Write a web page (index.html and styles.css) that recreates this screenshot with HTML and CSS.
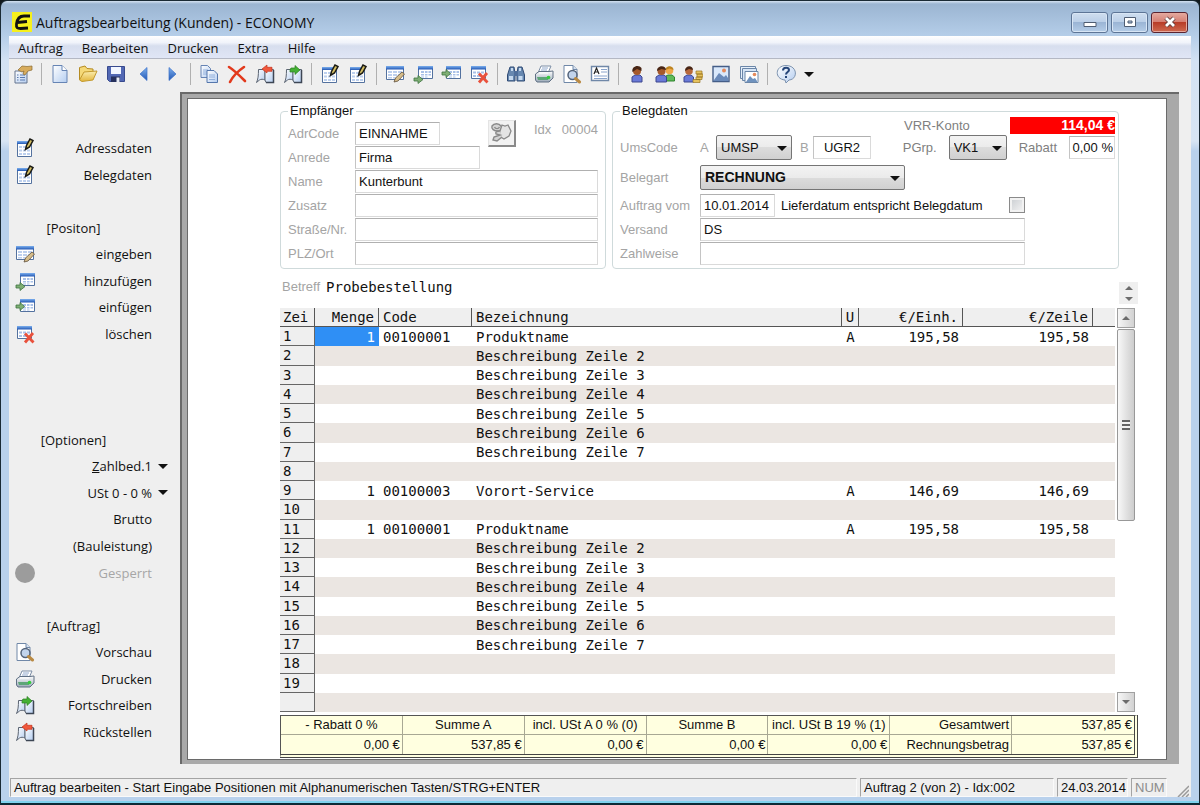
FILE: index.html
```html
<!DOCTYPE html>
<html lang="de">
<head>
  <meta charset="UTF-8" />
  <meta name="viewport" content="width=device-width, initial-scale=1.0"/>
  <title>Auftragsbearbeitung (Kunden) - ECONOMY</title>
  <link rel="stylesheet" href="styles.css">
</head>
<body>
  <!-- icon set -->
  <svg class="sprite" aria-hidden="true">
    <defs>
      <linearGradient id="g-page" x1="0" y1="0" x2="1" y2="1">
        <stop offset="0" stop-color="#fff"/><stop offset="1" stop-color="#b4cdf0"/>
      </linearGradient>
      <linearGradient id="g-blue" x1="0" y1="0" x2="0" y2="1">
        <stop offset="0" stop-color="#7db0ee"/><stop offset="1" stop-color="#2257b4"/>
      </linearGradient>
      <linearGradient id="g-gold" x1="0" y1="0" x2="0" y2="1">
        <stop offset="0" stop-color="#fbeeb0"/><stop offset="1" stop-color="#e3b53c"/>
      </linearGradient>
      <linearGradient id="g-grey" x1="0" y1="0" x2="0" y2="1">
        <stop offset="0" stop-color="#fff"/><stop offset="1" stop-color="#9ba9b8"/>
      </linearGradient>
    </defs>
    <symbol id="i-props" viewBox="0 0 20 20">
      <path d="M2 7h12v12H2z" fill="url(#g-page)" stroke="#64748f"/>
      <path d="M4 11h1.500M7 11h5M4 13.500h1.500M7 13.500h5M4 16h1.500M7 16h5" stroke="#5878ae"/>
      <path d="M5 6l4-4 5 .5 5-.5v4l-4 1-3 4-2-1 1-3-2 1z" fill="#d8ac5c" stroke="#8a6a30" stroke-width=".7"/>
    </symbol>
    <symbol id="i-new" viewBox="0 0 20 20">
      <path d="M3 1.500h9l5 5v12H3z" fill="url(#g-page)" stroke="#6684b4"/>
      <path d="M12 1.500v5h5" fill="#fff" stroke="#6684b4"/>
    </symbol>
    <symbol id="i-open" viewBox="0 0 20 20">
      <path d="M1.500 16V3.500L7 2l2 2.500 6 .5v3" fill="#f5d978" stroke="#b58b22"/>
      <path d="M1.500 16L6 8l13-1-4 9-11 1.500z" fill="url(#g-gold)" stroke="#c39a2e"/>
    </symbol>
    <symbol id="i-save" viewBox="0 0 20 20">
      <path d="M1.500 2.500h17v15h-15l-2-2z" fill="#5268b4" stroke="#384a8e"/>
      <path d="M5 3h10v7H5z" fill="#f2f6ff"/>
      <path d="M5 12.500h9V18H5z" fill="#26305c"/><path d="M10.500 13.500h3V18h-3z" fill="#e8ecf6"/>
    </symbol>
    <symbol id="i-prev" viewBox="0 0 20 20"><path d="M13 3.500v13L6 10z" fill="url(#g-blue)" stroke="#3a70c8" stroke-width=".7"/></symbol>
    <symbol id="i-next" viewBox="0 0 20 20"><path d="M7 3.500v13l7-6.500z" fill="url(#g-blue)" stroke="#3a70c8" stroke-width=".7"/></symbol>
    <symbol id="i-copy" viewBox="0 0 20 20">
      <path d="M2 1.500h6.500l3 3v9H2z" fill="url(#g-page)" stroke="#6684b4"/>
      <path d="M4 6h5M4 8h5M4 10h5" stroke="#92b0dc"/>
      <path d="M8 6.500h7l3.500 3.500v8.500H8z" fill="url(#g-page)" stroke="#5577ac"/>
      <path d="M10 11h6M10 13h6M10 15.500h6" stroke="#92b0dc"/>
    </symbol>
    <symbol id="i-cross" viewBox="0 0 20 20"><path d="M2 3c5 3 10 8 16 14M17 3C11 7 6 12 3 18" fill="none" stroke="#e2391c" stroke-width="2.600" stroke-linecap="round"/></symbol>
    <symbol id="i-book" viewBox="0 0 20 20">
      <path d="M3.500 5.500H10V16c-2-1-4-1-5.500 0l-3 2.500c1.500-3 2-7 2-13z" fill="url(#g-page)" stroke="#5b6472"/>
      <path d="M10 5.500h8.500v13H11L10 16z" fill="url(#g-page)" stroke="#5b6472"/>
      <path d="M18.500 6v12.500H11" fill="none" stroke="#3d4654" stroke-width="1.500"/>
    </symbol>
    <symbol id="i-back" viewBox="0 0 20 20">
      <use href="#i-book"/>
      <path d="M7 5l5-4v2.300h5v4h-5V9z" fill="#f0583c" stroke="#c4331c" stroke-width=".7"/>
    </symbol>
    <symbol id="i-forward" viewBox="0 0 20 20">
      <use href="#i-book"/>
      <path d="M17 6l-5-4.500v2.500H8c-1 1-1 2-1 4h5v2.500z" fill="#44b034" stroke="#2a7e20" stroke-width=".7"/>
    </symbol>
    <symbol id="i-edit" viewBox="0 0 20 20">
      <path d="M2.500 3.500h14v15h-14z" fill="#fff" stroke="#54729f"/>
      <path d="M2 3h15v3H2z" fill="url(#g-blue)"/>
      <path d="M4 8h3v2H4zM8 8h3v2H8zM4 11.500h3v2H4zM8 11.500h3v2H8zM12 11.500h3v2h-3zM4 15h3v2H4zM8 15h3v2H8zM12 15h3v2h-3z" fill="#bdd0ee"/>
      <path d="M10.500 11.500l1-4 3.500-6.500 3 1.500-3.500 6.500z" fill="#d2bd62" stroke="#1a1a14" stroke-width="1.500"/>
    </symbol>
    <symbol id="i-table" viewBox="0 0 20 20">
      <path d="M1.500 2.500h17v13h-17z" fill="#fff" stroke="#54729f"/>
      <path d="M1 2h18v3.500H1z" fill="url(#g-blue)"/>
      <path d="M3 7h4v2H3zM8 7h4v2H8zM13 7h4v2h-4zM3 10h4v2H3zM8 10h4v2H8zM13 10h4v2h-4zM3 13h4v1.500H3zM8 13h4v1.500H8z" fill="#bdd0ee"/>
    </symbol>
    <symbol id="i-enter" viewBox="0 0 20 20">
      <use href="#i-table"/>
      <path d="M9 18l1.500-4L17 8l2.500 2-6.500 7z" fill="#d6bd8a" stroke="#5f4f38" stroke-width=".8"/>
    </symbol>
    <symbol id="i-small" viewBox="0 0 20 20">
      <path d="M5.500 2.500h14v12h-14z" fill="#fff" stroke="#54729f"/>
      <path d="M5 2h15v3.500H5z" fill="url(#g-blue)"/>
      <path d="M8 7h3v2H8zM12 7h2.500v2H12zM15.500 7H18v2h-2.500zM8 10h3v1.500H8zM12 10h2.500v1.500H12zM15.500 10H18v1.500h-2.500zM8 12.500h3v1H8zM12 12.500h2.500v1H12z" fill="#a9c1e8"/>
    </symbol>
    <symbol id="i-add" viewBox="0 0 20 20">
      <use href="#i-small"/>
      <path d="M1 14h4v-2.500l5 4-5 4V17H1z" fill="#7fae74" stroke="#3e7440" stroke-width=".8"/>
    </symbol>
    <symbol id="i-insert" viewBox="0 0 20 20">
      <use href="#i-small"/>
      <path d="M1 8h4V5.500l4.500 4-4.500 4V11H1z" fill="#7fae74" stroke="#3e7440" stroke-width=".8"/>
    </symbol>
    <symbol id="i-remove" viewBox="0 0 20 20">
      <path d="M2.500 2.500h14v12h-14z" fill="#fff" stroke="#54729f"/>
      <path d="M2 2h15v3.500H2z" fill="url(#g-blue)"/>
      <path d="M4 7.500h3v2H4zM8 7.500h3v2H8zM12 7.500h3v2h-3zM4 11h3v2H4zM8 11h3v2H8z" fill="#a9c1e8"/>
      <path d="M10 9.500l8.500 9M18 9l-8 9.500" stroke="#e9513c" stroke-width="2.800"/>
    </symbol>
    <symbol id="i-find" viewBox="0 0 20 20">
      <path d="M4 3h4l1 6v8H1.500v-6zM12 3h4l2.500 8v6H11V9z" fill="#6788b0" stroke="#2f4a74"/>
      <path d="M8 7h4v5H8z" fill="#4f6f9c"/>
      <path d="M3 12h4v4H3zM12.500 12h4v4h-4zM5 4h2v3H5zM13 4h2v3h-2z" fill="#c6daf0"/>
    </symbol>
    <symbol id="i-print" viewBox="0 0 20 20">
      <path d="M7 2h10l-3 7H4z" fill="#fff" stroke="#7c8ea6"/>
      <path d="M8 4h6M7 6h6" stroke="#90a8cc"/>
      <path d="M1.500 10L5 7.500h10l4-.500v7l-4 4H3l-1.500-2z" fill="url(#g-grey)" stroke="#607084"/>
      <path d="M5 9h9" stroke="#fff"/>
      <path d="M3 13h11v3H4z" fill="#5ea578"/><circle cx="14.500" cy="13.500" r="1.800" fill="#36cc3c"/>
    </symbol>
    <symbol id="i-preview" viewBox="0 0 20 20">
      <path d="M2 1.500h9l4 4v13H2z" fill="#fff" stroke="#7088a8"/>
      <path d="M11 1.500v4h4" fill="#d6e2f2" stroke="#7088a8"/>
      <circle cx="10.500" cy="11" r="4.500" fill="#c2d4ec" stroke="#53637a" stroke-width="1.500"/>
      <path d="M13.500 14.500l4 3.500" stroke="#b98a44" stroke-width="3" stroke-linecap="round"/>
    </symbol>
    <symbol id="i-card" viewBox="0 0 20 20">
      <path d="M1.500 2.500h17v14h-17z" fill="#fff" stroke="#7088a8" stroke-width="1.400"/>
      <path d="M4 10l2.500-6L9 10M5 8h3" fill="none" stroke="#222" stroke-width="1.200"/>
      <path d="M11 5.500h6M11 8h6M4 12h13M4 14.500h13" stroke="#8aa4cc"/>
    </symbol>
    <symbol id="i-user" viewBox="0 0 20 20">
      <path d="M5 18v-5l3-2h5l2 2v5z" fill="#6a7ad8" stroke="#3c478e"/>
      <circle cx="10" cy="7" r="4" fill="#a65a2c"/>
      <path d="M5.500 8C4 2 12 0 14.500 4v3L10 5z" fill="#482616"/>
    </symbol>
    <symbol id="i-users" viewBox="0 0 20 20">
      <path d="M11 17v-5l2-1h4l2.500 2v4z" fill="#5fba58" stroke="#31852f"/>
      <circle cx="14.500" cy="6.500" r="3.800" fill="#f0a848"/><path d="M10.500 6c0-5 8-5 8 0l-4-1.500z" fill="#bd8420"/>
      <path d="M1 18v-5l3-2h5l2.500 2v5z" fill="#6a7ad8" stroke="#3c478e"/>
      <circle cx="6.500" cy="7" r="4" fill="#a65a2c"/><path d="M2 7c0-6 9-6 9-1L6.500 5z" fill="#482616"/>
    </symbol>
    <symbol id="i-usermoney" viewBox="0 0 20 20">
      <path d="M1 18v-5l3-2h4l2.500 2v5z" fill="#6a7ad8" stroke="#3c478e"/>
      <circle cx="6" cy="7" r="3.800" fill="#b8683a"/><path d="M2 7c0-6 8-6 8-1L6 5z" fill="#482616"/>
      <path d="M13 7h6v3h-6zM14 10h6v3h-6zM13 13h6v2.500h-6zM10 15.500h7v3h-7z" fill="#e6c25e" stroke="#9a7722" stroke-width=".7"/>
    </symbol>
    <symbol id="i-image" viewBox="0 0 20 20">
      <path d="M2 2.500h16v15H2z" fill="#d9e8fb" stroke="#455e88" stroke-width="1.400"/>
      <path d="M3 16l5-7 5 4 2-2 2 3v3H3z" fill="#6a8aba"/><circle cx="13" cy="6.500" r="2" fill="#e58a5c"/>
    </symbol>
    <symbol id="i-images" viewBox="0 0 20 20">
      <path d="M1.500 2.500h15v12h-15z" fill="#e6f0fb" stroke="#6b86a8"/>
      <path d="M3.500 4.500h14v12h-14z" fill="#d6e5f6" stroke="#6b86a8"/>
      <path d="M6 7.500h13v11H6z" fill="#fff" stroke="#6b86a8"/>
      <path d="M7 18l4-6 3 3 2-1 2 3v1z" fill="#6f92be"/><circle cx="15.500" cy="10.500" r="1.800" fill="#e58a5c"/>
    </symbol>
    <symbol id="i-help" viewBox="0 0 20 20">
      <path d="M10 1.500c12 0 12 14 3 14.500l-3 3-1-3C-2 15-1 1.500 10 1.500z" fill="url(#g-page)" stroke="#7c92ae"/>
      <path d="M7 6.500c0-4 6-3.500 6-.5 0 2-3 2-3 4.500M10 12v2" fill="none" stroke="#244478" stroke-width="2"/>
    </symbol>
    <symbol id="i-lookup" viewBox="0 0 24 24">
      <path d="M3 5c2-3 7-3 9 0 2 2 0 5-3 5-4 0-7-2-6-5zM5.500 6c1 2 4 2 5 0" fill="#d4d4d4" stroke="#8a8a8a" stroke-width="1.400"/>
      <path d="M13 4l3 1 3-1 3 6-2 5-5 3-5-3 1-5z" fill="#e4e4e4" stroke="#8a8a8a" stroke-width="1.300"/>
      <path d="M11 10c-3 0-5 1-4 3l4 1-6 2-1 3 4 1 5-4" fill="#d4d4d4" stroke="#8a8a8a" stroke-width="1.400"/>
    </symbol>
  </svg>

  <div class="window">
    <header class="titlebar">
      <svg class="app-icon" viewBox="0 0 20 20" aria-hidden="true">
        <path d="M0 0h20v20H0z" fill="#f6f01c"/>
        <path d="M18 4h-6C7 4 5 8 4.500 12s1 4.500 4 4.500L16 16M5 10.500l10-1" fill="none" stroke="#111" stroke-width="2.800"/>
      </svg>
      <h1>Auftragsbearbeitung (Kunden) - ECONOMY</h1>
      <div class="window-buttons">
        <button aria-label="Minimieren"><svg viewBox="0 0 16 14"><path d="M2 7.500h12v4H2z" fill="#fff" stroke="#4f5d72"/></svg></button>
        <button aria-label="Maximieren"><svg viewBox="0 0 16 14"><path d="M2.500 2.500h11v9h-11zM6 6h4v2H6z" fill="#fff" fill-rule="evenodd" stroke="#4f5d72"/></svg></button>
        <button class="close" aria-label="Schließen"><svg viewBox="0 0 16 14"><path d="M4 3l8 8M12 3l-8 8" stroke="#5c3a3a" stroke-width="4.500"/><path d="M4 3l8 8M12 3l-8 8" stroke="#fff" stroke-width="2.800"/></svg></button>
      </div>
    </header>

    <div class="client">
      <nav class="menubar">
        <button>Auftrag</button>
        <button>Bearbeiten</button>
        <button>Drucken</button>
        <button>Extra</button>
        <button>Hilfe</button>
      </nav>

      <div class="toolbar" role="toolbar">
        <button aria-label="Eigenschaften"><svg><use href="#i-props"/></svg></button>
        <span class="sep"></span>
        <button aria-label="Neu"><svg><use href="#i-new"/></svg></button>
        <button aria-label="Öffnen"><svg><use href="#i-open"/></svg></button>
        <button aria-label="Speichern"><svg><use href="#i-save"/></svg></button>
        <button aria-label="Zurück"><svg><use href="#i-prev"/></svg></button>
        <button aria-label="Weiter"><svg><use href="#i-next"/></svg></button>
        <span class="sep"></span>
        <button aria-label="Kopieren"><svg><use href="#i-copy"/></svg></button>
        <button aria-label="Löschen"><svg><use href="#i-cross"/></svg></button>
        <button aria-label="Rückstellen"><svg><use href="#i-back"/></svg></button>
        <button aria-label="Fortschreiben"><svg><use href="#i-forward"/></svg></button>
        <span class="sep"></span>
        <button aria-label="Adressdaten"><svg><use href="#i-edit"/></svg></button>
        <button aria-label="Belegdaten"><svg><use href="#i-edit"/></svg></button>
        <span class="sep"></span>
        <button aria-label="Position eingeben"><svg><use href="#i-enter"/></svg></button>
        <button aria-label="Position hinzufügen"><svg><use href="#i-add"/></svg></button>
        <button aria-label="Position einfügen"><svg><use href="#i-insert"/></svg></button>
        <button aria-label="Position löschen"><svg><use href="#i-remove"/></svg></button>
        <span class="sep"></span>
        <button aria-label="Suchen"><svg><use href="#i-find"/></svg></button>
        <button aria-label="Drucken"><svg><use href="#i-print"/></svg></button>
        <button aria-label="Vorschau"><svg><use href="#i-preview"/></svg></button>
        <button aria-label="Adresskarte"><svg><use href="#i-card"/></svg></button>
        <span class="sep"></span>
        <button aria-label="Kunde"><svg><use href="#i-user"/></svg></button>
        <button aria-label="Kunden"><svg><use href="#i-users"/></svg></button>
        <button aria-label="Konto"><svg><use href="#i-usermoney"/></svg></button>
        <button aria-label="Bild"><svg><use href="#i-image"/></svg></button>
        <button aria-label="Bilder"><svg><use href="#i-images"/></svg></button>
        <span class="sep"></span>
        <button aria-label="Hilfe"><svg><use href="#i-help"/></svg></button>
        <button class="more" aria-label="Mehr"><span class="arrow"></span></button>
      </div>

      <div class="workspace">
        <aside class="sidebar">
          <button><svg><use href="#i-edit"/></svg>Adressdaten</button>
          <button><svg><use href="#i-edit"/></svg>Belegdaten</button>
          <div class="gap"></div>
          <h2>[Positon]</h2>
          <button><svg><use href="#i-enter"/></svg>eingeben</button>
          <button><svg><use href="#i-add"/></svg>hinzufügen</button>
          <button><svg><use href="#i-insert"/></svg>einfügen</button>
          <button><svg><use href="#i-remove"/></svg>löschen</button>
          <div class="gap wide"></div>
          <h2>[Optionen]</h2>
          <button class="drop"><span><u>Z</u>ahlbed.1</span></button>
          <button class="drop">USt 0 - 0 %</button>
          <button>Brutto</button>
          <button>(Bauleistung)</button>
          <button disabled><svg viewBox="0 0 20 20"><circle cx="10" cy="10" r="10" fill="#9c9c9c"/></svg>Gesperrt</button>
          <div class="gap"></div>
          <h2>[Auftrag]</h2>
          <button><svg><use href="#i-preview"/></svg>Vorschau</button>
          <button><svg><use href="#i-print"/></svg>Drucken</button>
          <button><svg><use href="#i-forward"/></svg>Fortschreiben</button>
          <button><svg><use href="#i-back"/></svg>Rückstellen</button>
        </aside>

        <main class="desk">
          <div class="page">
            <form class="head">
              <fieldset class="recipient">
                <legend>Empfänger</legend>
                <div class="row">
                  <label for="adrcode">AdrCode</label>
                  <input class="w-code" type="text" id="adrcode" value="EINNAHME" />
                  <button class="lookup" type="button" aria-label="Adresse suchen"><svg><use href="#i-lookup"/></svg></button>
                  <span class="idx"><span>Idx</span><span>00004</span></span>
                </div>
                <div class="row">
                  <label for="anrede">Anrede</label>
                  <input class="w-title" type="text" id="anrede" value="Firma" />
                </div>
                <div class="row">
                  <label for="name">Name</label>
                  <input class="grow" type="text" id="name" value="Kunterbunt" />
                </div>
                <div class="row">
                  <label for="zusatz">Zusatz</label>
                  <input class="grow" type="text" id="zusatz" />
                </div>
                <div class="row">
                  <label for="strasse">Straße/Nr.</label>
                  <input class="grow" type="text" id="strasse" />
                </div>
                <div class="row">
                  <label for="ort">PLZ/Ort</label>
                  <input class="grow" type="text" id="ort" />
                </div>
              </fieldset>

              <fieldset class="document">
                <legend>Belegdaten</legend>
                <div class="row account">
                  <span class="dark">VRR-Konto</span>
                  <output class="balance">114,04 €</output>
                </div>
                <div class="row codes">
                  <label for="ums-a">UmsCode</label>
                  <span class="letter">A</span>
                  <span class="select w-ums"><select id="ums-a"><option>UMSP</option></select></span>
                  <label class="letter" for="ums-b">B</label>
                  <input class="w-ugr" type="text" id="ums-b" value="UGR2" />
                  <div class="pricing">
                    <label class="dark" for="pgrp">PGrp.</label>
                    <span class="select w-grp"><select id="pgrp"><option>VK1</option></select></span>
                    <label class="dark" for="rabatt">Rabatt</label>
                    <input class="w-pct" type="text" id="rabatt" value="0,00 %" />
                  </div>
                </div>
                <div class="row kind">
                  <label for="belegart">Belegart</label>
                  <span class="select w-kind"><select id="belegart"><option>RECHNUNG</option></select></span>
                </div>
                <div class="row">
                  <label for="vom">Auftrag vom</label>
                  <input class="w-date" type="text" id="vom" value="10.01.2014" />
                  <div class="delivery">
                    <label for="lieferdatum">Lieferdatum entspricht Belegdatum</label>
                    <input type="checkbox" id="lieferdatum" />
                  </div>
                </div>
                <div class="row">
                  <label for="versand">Versand</label>
                  <input class="w-ship" type="text" id="versand" value="DS" />
                </div>
                <div class="row">
                  <label for="zahlweise">Zahlweise</label>
                  <input class="w-ship" type="text" id="zahlweise" />
                </div>
              </fieldset>
            </form>

            <div class="subject">
              <label for="betreff">Betreff</label>
              <input type="text" id="betreff" value="Probebestellung" />
              <div class="spin">
                <button aria-label="Vorherige Zeile"><span class="tri up"></span></button>
                <button aria-label="Nächste Zeile"><span class="tri down"></span></button>
              </div>
            </div>

            <div class="grid">
              <table class="positions">
                <colgroup>
                  <col class="c-no"><col class="c-qty"><col class="c-code"><col><col class="c-u"><col class="c-unit"><col class="c-line"><col class="c-end">
                </colgroup>
                <thead>
                  <tr><th>Zei</th><th class="num">Menge</th><th>Code</th><th>Bezeichnung</th><th class="mid">U</th><th class="num">€/Einh.</th><th class="num">€/Zeile</th><th></th></tr>
                </thead>
                <tbody>
                  <tr><th>1</th><td class="num active">1</td><td>00100001</td><td>Produktname</td><td class="mid">A</td><td class="num">195,58</td><td class="num">195,58</td><td></td></tr>
                  <tr><th>2</th><td></td><td></td><td>Beschreibung Zeile 2</td><td></td><td></td><td></td><td></td></tr>
                  <tr><th>3</th><td></td><td></td><td>Beschreibung Zeile 3</td><td></td><td></td><td></td><td></td></tr>
                  <tr><th>4</th><td></td><td></td><td>Beschreibung Zeile 4</td><td></td><td></td><td></td><td></td></tr>
                  <tr><th>5</th><td></td><td></td><td>Beschreibung Zeile 5</td><td></td><td></td><td></td><td></td></tr>
                  <tr><th>6</th><td></td><td></td><td>Beschreibung Zeile 6</td><td></td><td></td><td></td><td></td></tr>
                  <tr><th>7</th><td></td><td></td><td>Beschreibung Zeile 7</td><td></td><td></td><td></td><td></td></tr>
                  <tr><th>8</th><td></td><td></td><td></td><td></td><td></td><td></td><td></td></tr>
                  <tr><th>9</th><td class="num">1</td><td>00100003</td><td>Vorort-Service</td><td class="mid">A</td><td class="num">146,69</td><td class="num">146,69</td><td></td></tr>
                  <tr><th>10</th><td></td><td></td><td></td><td></td><td></td><td></td><td></td></tr>
                  <tr><th>11</th><td class="num">1</td><td>00100001</td><td>Produktname</td><td class="mid">A</td><td class="num">195,58</td><td class="num">195,58</td><td></td></tr>
                  <tr><th>12</th><td></td><td></td><td>Beschreibung Zeile 2</td><td></td><td></td><td></td><td></td></tr>
                  <tr><th>13</th><td></td><td></td><td>Beschreibung Zeile 3</td><td></td><td></td><td></td><td></td></tr>
                  <tr><th>14</th><td></td><td></td><td>Beschreibung Zeile 4</td><td></td><td></td><td></td><td></td></tr>
                  <tr><th>15</th><td></td><td></td><td>Beschreibung Zeile 5</td><td></td><td></td><td></td><td></td></tr>
                  <tr><th>16</th><td></td><td></td><td>Beschreibung Zeile 6</td><td></td><td></td><td></td><td></td></tr>
                  <tr><th>17</th><td></td><td></td><td>Beschreibung Zeile 7</td><td></td><td></td><td></td><td></td></tr>
                  <tr><th>18</th><td></td><td></td><td></td><td></td><td></td><td></td><td></td></tr>
                  <tr><th>19</th><td></td><td></td><td></td><td></td><td></td><td></td><td></td></tr>
                  <tr><th>&nbsp;</th><td></td><td></td><td></td><td></td><td></td><td></td><td></td></tr>
                </tbody>
              </table>
              <div class="scrollbar">
                <button aria-label="Nach oben"><span class="tri up"></span></button>
                <div class="track"><div class="thumb"><span class="grip"></span></div></div>
                <button aria-label="Nach unten"><span class="tri down"></span></button>
              </div>
            </div>

            <table class="totals">
              <tr><td>- Rabatt 0 %</td><td>Summe A</td><td>incl. USt A 0 % (0)</td><td>Summe B</td><td>incl. USt B 19 % (1)</td><td class="num">Gesamtwert</td><td class="num">537,85 €</td></tr>
              <tr><td>0,00 €</td><td>537,85 €</td><td>0,00 €</td><td>0,00 €</td><td>0,00 €</td><td>Rechnungsbetrag</td><td>537,85 €</td></tr>
            </table>
          </div>
        </main>
      </div>

      <footer class="statusbar">
        <span class="message">Auftrag bearbeiten - Start Eingabe Positionen mit Alphanumerischen Tasten/STRG+ENTER</span>
        <span class="record">Auftrag 2 (von 2) - Idx:002</span>
        <span class="date">24.03.2014</span>
        <span class="num-lock">NUM</span>
        <svg viewBox="0 0 12 12" aria-hidden="true"><path d="M1 12L12 1M5 12l7-7M9 12l3-3" stroke="#9a9a9a" stroke-width="1.500"/></svg>
      </footer>
    </div>
  </div>
</body>
</html>
```
FILE: styles.css
```css
* {
  box-sizing: border-box;
}

body {
  margin: 0;
  background: #10181c;
  font-family: "Liberation Sans", Arial, sans-serif;
  font-size: 13px;
  color: #111;
}

button,
input,
select {
  font: inherit;
  color: inherit;
  margin: 0;
}

button {
  padding: 0;
  border: none;
  background: none;
}

.sprite {
  position: absolute;
  width: 0;
  height: 0;
}

/* window frame */

.window {
  display: flex;
  flex-direction: column;
  min-height: 100vh;
  padding: 1px 8px 6px;
  border: 1px solid #1a2a35;
  border-bottom: 2px solid #0c2a36;
  border-radius: 7px 7px 0 0;
  background: linear-gradient(#d4e2f1 0, #9bb5d2 3px, #b4cde8 34px, #d3e2f3 60px, #d8e5f4 140px, #b9d1ec 150px, #b9d1ec);
  box-shadow: inset 0 -2px 0 #7fd2ee;
}

.titlebar {
  display: flex;
  align-items: center;
  gap: 4px;
  height: 34px;
  padding: 6px 3px 0;
  font-family: "Open Sans", sans-serif;
}

.app-icon {
  width: 20px;
  height: 20px;
}

.titlebar h1 {
  flex: 1;
  margin: 0;
  font-size: 14px;
  font-weight: normal;
}

.window-buttons {
  display: flex;
  gap: 3px;
}

.window-buttons button {
  display: flex;
  align-items: center;
  justify-content: center;
  width: 37px;
  height: 21px;
  border: 1px solid #5d7596;
  border-radius: 3px;
  background: linear-gradient(#cfdeef 0, #bcd0e8 45%, #9bb5d5 50%, #b5cde8);
  box-shadow: inset 0 0 0 1px #d8e6f5;
}

.window-buttons .close {
  border-color: #5a2430;
  background: linear-gradient(#e4aaa0 0, #d68074 45%, #b83c28 50%, #cf6a50);
  box-shadow: inset 0 0 0 1px #e6a89c;
}

.window-buttons svg {
  width: 16px;
  height: 14px;
}

.client {
  flex: 1;
  display: flex;
  flex-direction: column;
  background: #efefef;
}

.menubar {
  display: flex;
  gap: 19px;
  height: 23px;
  padding: 1px 9px 0;
  border-bottom: 1px solid #b4b8c4;
  background: linear-gradient(#fff 0, #f0f3fa 30%, #d7deee 45%, #e0e6f6);
  font-family: "Open Sans", sans-serif;
  font-size: 13px;
}

.toolbar {
  display: flex;
  align-items: center;
  height: 33px;
  padding-bottom: 3px;
}

.toolbar button {
  display: flex;
  justify-content: center;
  width: 28px;
}

.toolbar svg {
  width: 20px;
  height: 20px;
}

.toolbar .sep {
  width: 1px;
  height: 22px;
  margin: 0 4px;
  background: #b0b0b0;
}

.toolbar .more {
  width: 17px;
}

.arrow,
.drop::after,
.select::after {
  content: "";
  border: 5px solid transparent;
  border-top-color: #111;
  border-bottom: none;
}

.workspace {
  flex: 1;
  display: flex;
}

/* side panel */

.sidebar {
  display: flex;
  flex-direction: column;
  width: 171px;
  padding: 43px 28px 19px 6px;
  font-family: "Open Sans", sans-serif;
  font-size: 13px;
}

.sidebar h2,
.sidebar button,
.gap {
  flex: 1 1 0;
}

.gap.wide {
  flex-grow: 3;
}

.sidebar h2 {
  display: flex;
  align-items: center;
  justify-content: center;
  margin: 0;
  padding-right: 20px;
  font-size: 13px;
  font-weight: normal;
}

.sidebar button {
  position: relative;
  display: flex;
  align-items: center;
  justify-content: flex-end;
}

.sidebar button:disabled {
  color: #a6a6a6;
}

.sidebar svg {
  width: 20px;
  height: 20px;
  margin-right: auto;
}

.drop::after {
  position: absolute;
  right: -16px;
}

/* document area */

.desk {
  flex: 1;
  margin-right: 12px;
  padding: 4px 12px 4px 5px;
  border: 1px solid #6a6a6a;
  border-width: 2px 0 0 2px;
  background: #a9a9a9;
}

.page {
  display: flex;
  flex-direction: column;
  height: 100%;
  padding: 6px 28px 1px 92px;
  border: 1px solid #6a6a6a;
  background: #fff;
}

.head {
  display: flex;
  gap: 6px;
  padding-right: 19px;
}

fieldset {
  min-width: 0;
  margin: 0;
  padding: 4px 7px 3px;
  border: 1px solid #cfdadb;
  border-radius: 4px;
}

legend {
  padding: 0 2px;
  line-height: 12px;
}

.recipient {
  width: 326px;
}

.document {
  flex: 1;
  padding: 0 3px 3px 7px;
}

.row {
  display: flex;
  align-items: center;
  height: 24px;
}

.row label,
.idx,
.letter,
.subject label {
  color: #a4a4a4;
}

.row > label:first-child {
  width: 67px;
}

.document .row > label:first-child {
  width: 80px;
}

.row .dark {
  color: #808080;
}

input[type="text"] {
  height: 23px;
  padding: 0 3px;
  border: 1px solid #dadada;
  border-top-color: #b0b0b0;
  border-left-color: #c4c4c4;
  background: #fff;
}

.grow {
  flex: 1;
}

.w-code {
  width: 85px;
}

.w-title {
  width: 125px;
}

.lookup {
  width: 28px;
  height: 27px;
  margin-left: 48px;
  border: 1px solid #e4e4e4;
  border-right: 2px solid #8a8a8a;
  border-bottom: 2px solid #8a8a8a;
  background: #f2f2f2;
}

.lookup svg {
  display: block;
  width: 24px;
  height: 24px;
}

.idx {
  flex: 1;
  display: flex;
  justify-content: space-between;
  margin-left: 18px;
  padding-bottom: 8px;
}

.account {
  justify-content: space-between;
  height: 17px;
  padding-left: 284px;
}

.balance {
  width: 105px;
  background: #f00;
  color: #fff;
  font-size: 14px;
  font-weight: bold;
  line-height: 17px;
  text-align: right;
}

.codes {
  height: 27px;
}

.codes .letter {
  width: 16px;
}

.codes label.letter {
  width: 21px;
  padding-left: 8px;
}

.pricing {
  flex: 1;
  display: flex;
  align-items: center;
  justify-content: flex-end;
  gap: 12px;
}

.select {
  position: relative;
}

.select::after {
  position: absolute;
  top: 11px;
  right: 5px;
  pointer-events: none;
}

.select select {
  appearance: none;
  width: 100%;
  height: 25px;
  padding: 0 4px;
  border: 1px solid #757575;
  border-radius: 2px;
  background: linear-gradient(#f3f3f3 0, #ebebeb 50%, #dcdcdc 50%, #d0d0d0);
}

.w-ums {
  width: 76px;
}

.w-ugr {
  width: 58px;
  text-align: center;
}

.w-grp {
  width: 58px;
}

.pricing .w-pct {
  width: 46px;
  padding: 0 1px;
  text-align: right;
}

.kind {
  height: 32px;
}

.w-kind {
  width: 205px;
}

.w-kind select {
  font-size: 14px;
  font-weight: bold;
}

.w-date {
  width: 75px;
}

.delivery {
  display: flex;
  align-items: center;
  justify-content: space-between;
  width: 250px;
  padding-left: 6px;
}

.delivery label {
  color: #111;
}

.delivery input {
  appearance: none;
  width: 16px;
  height: 16px;
  border: 1px solid #8a8a8a;
  background: linear-gradient(135deg, #c8ccd0, #f6f6f6);
  box-shadow: inset 0 0 0 2px #f2f2f2;
}

.w-ship {
  width: 325px;
}

.subject {
  display: flex;
  align-items: flex-start;
  gap: 6px;
  height: 27px;
  margin-top: 8px;
}

.subject label {
  padding-left: 2px;
  line-height: 20px;
}

.subject input[type="text"] {
  flex: 1;
  height: 20px;
  border: none;
  padding: 0;
  font-family: "DejaVu Sans Mono", monospace;
  font-size: 14px;
}

.spin {
  display: flex;
  flex-direction: column;
  align-self: flex-end;
  width: 19px;
  background: #efefef;
}

.spin button {
  display: flex;
  align-items: center;
  justify-content: center;
  height: 11px;
}

.tri {
  border: 4px solid transparent;
}

.tri.up {
  border-top: none;
  border-bottom-color: #6c6c6c;
}

.tri.down {
  border-bottom: none;
  border-top-color: #6c6c6c;
}

/* positions */

.grid {
  flex: 1;
  display: flex;
  gap: 2px;
  padding-right: 3px;
  margin-top: 4px;
}

.positions {
  flex: 1;
  height: 100%;
  table-layout: fixed;
  border-collapse: separate;
  border-spacing: 0;
  font-family: "DejaVu Sans Mono", monospace;
  font-size: 14px;
  line-height: 16px;
}

.c-no {
  width: 35px;
}

.c-qty {
  width: 64px;
}

.c-code {
  width: 93px;
}

.c-u {
  width: 17px;
}

.c-unit {
  width: 104px;
}

.c-line {
  width: 130px;
}

.c-end {
  width: 22px;
}

.positions th,
.positions td {
  padding: 0 4px;
  text-align: left;
  font-weight: normal;
  white-space: nowrap;
}

.positions thead th {
  height: 19px;
  border-right: 1px solid #555;
  border-bottom: 1px solid #555;
  background: #efefef;
}

.positions thead th:first-child,
.positions tbody th {
  padding: 0 3px;
}

.positions thead th:last-child {
  border-right: none;
}

.positions tbody th {
  border-right: 1px solid #666;
  border-bottom: 1px solid #666;
  background: #efefef;
}

.positions tbody tr:nth-child(even) {
  background: #ebe6e2;
}

.positions .num {
  text-align: right;
}

.positions .mid {
  padding: 0;
  text-align: center;
}

.positions .active {
  background: #2f8ff5;
  color: #fff;
}

.scrollbar {
  display: flex;
  flex-direction: column;
  width: 18px;
}

.scrollbar button {
  display: flex;
  align-items: center;
  justify-content: center;
  height: 20px;
  border: 1px solid #a0a0a0;
  background: linear-gradient(90deg, #f6f6f6, #d2d2d2);
}

.track {
  flex: 1;
  padding: 1px 0;
}

.thumb {
  display: flex;
  align-items: center;
  justify-content: center;
  height: 53%;
  border: 1px solid #989898;
  border-radius: 2px;
  background: linear-gradient(90deg, #f8f8f8, #e2e2e2 50%, #cdcdcd);
}

.grip {
  width: 8px;
  height: 10px;
  background: repeating-linear-gradient(#666 0, #666 2px, #f4f4f4 2px, #f4f4f4 4px);
}

/* totals */

.totals {
  width: 100%;
  margin-top: 3px;
  table-layout: fixed;
  border-collapse: separate;
  border-spacing: 0;
  border: 1px solid #555;
  border-right: 4px double #444;
  border-bottom: 4px double #444;
  background: #ffffe0;
}

.totals td {
  height: 19px;
  padding: 0 2px;
  border-right: 1px solid #a8a894;
  line-height: 18px;
  text-align: right;
  white-space: nowrap;
}

.totals td:last-child {
  border-right: none;
}

.totals tr:first-child td {
  border-bottom: 1px solid #a8a894;
  text-align: center;
}

.totals tr:first-child .num {
  text-align: right;
}

/* status bar */

.statusbar {
  display: flex;
  gap: 3px;
  margin-top: 14px;
  padding: 0 2px 0 1px;
}

.statusbar span {
  height: 19px;
  padding: 0 3px;
  border: 1px solid #fafafa;
  border-top-color: #a4a4a4;
  border-left-color: #a4a4a4;
  line-height: 18px;
  white-space: nowrap;
}

.statusbar .message {
  flex: 1;
}

.statusbar .record {
  width: 194px;
}

.statusbar .date {
  width: 71px;
}

.statusbar .num-lock {
  width: 36px;
  color: #8c8c8c;
}

.statusbar svg {
  align-self: flex-end;
  width: 12px;
  height: 12px;
  margin-left: 7px;
}
```
